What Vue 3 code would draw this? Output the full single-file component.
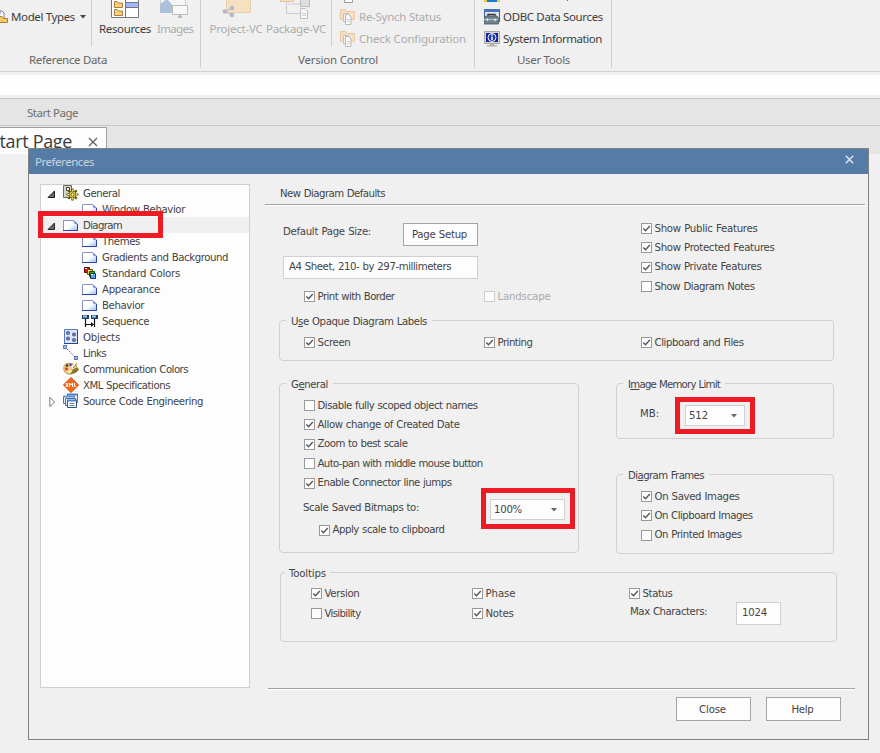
<script setup>
const applyFit = (el, width) => {
  el.style.letterSpacing = '0px'
  const range = document.createRange()
  range.selectNodeContents(el)
  const natural = range.getBoundingClientRect().width
  const count = el.textContent.length
  el.style.letterSpacing = ((width - natural) / count).toFixed(3) + 'px'
}
// Spreads a label over the given width in pixels.
const vFit = { mounted: (el, { value }) => applyFit(el, value) }

const tree = [
  { label: 'General', icon: 'gear', w: 37, open: true },
  { label: 'Window Behavior', icon: 'page', w: 83, child: true },
  { label: 'Diagram', icon: 'page', w: 39, open: true, selected: true },
  { label: 'Themes', icon: 'page', w: 38, child: true },
  { label: 'Gradients and Background', icon: 'page', w: 126, child: true },
  { label: 'Standard Colors', icon: 'colors', w: 78, child: true },
  { label: 'Appearance', icon: 'page', w: 58, child: true },
  { label: 'Behavior', icon: 'page', w: 42, child: true },
  { label: 'Sequence', icon: 'sequence', w: 47, child: true },
  { label: 'Objects', icon: 'objects', w: 37 },
  { label: 'Links', icon: 'links', w: 23 },
  { label: 'Communication Colors', icon: 'palette', w: 105 },
  { label: 'XML Specifications', icon: 'xml', w: 87 },
  { label: 'Source Code Engineering', icon: 'source', w: 120, closed: true },
]
const features = [
  { label: 'Show Public Features', w: 103, on: true },
  { label: 'Show Protected Features', w: 120, on: true },
  { label: 'Show Private Features', w: 107, on: true },
  { label: 'Show Diagram Notes', w: 100 },
]
const page = [
  { label: 'Print with Border', w: 77, on: true },
  { label: 'Landscape', w: 53, disabled: true },
]
const opaque = [
  { label: 'Screen', w: 33, on: true },
  { label: 'Printing', w: 35, on: true },
  { label: 'Clipboard and Files', w: 89, on: true },
]
const general = [
  { label: 'Disable fully scoped object names', w: 160 },
  { label: 'Allow change of Created Date', w: 142, on: true },
  { label: 'Zoom to best scale', w: 90, on: true },
  { label: 'Auto-pan with middle mouse button', w: 165 },
  { label: 'Enable Connector line jumps', w: 134, on: true },
]
const frames = [
  { label: 'On Saved Images', w: 85, on: true },
  { label: 'On Clipboard Images', w: 98, on: true },
  { label: 'On Printed Images', w: 87 },
]
const tips = [
  { label: 'Version', w: 35, on: true },
  { label: 'Phase', w: 30, on: true },
  { label: 'Status', w: 30, on: true },
  { label: 'Visibility', w: 36 },
  { label: 'Notes', w: 28, on: true },
]
</script>

<template>
  <div class="app">
    <svg class="defs" aria-hidden="true">
      <defs>
        <linearGradient id="pg" x1="0" y1="0" x2="1" y2="1"><stop offset=".5" stop-color="#fff" /><stop offset="1" stop-color="#9db9ee" /></linearGradient>
        <symbol id="i-page" viewBox="0 0 16 16">
          <path d="M.5 3.500H11L14.500 7V13.500H.5Z" fill="url(#pg)" stroke="#8d8fc9" />
          <path d="M0 13.500H14.500V7" fill="none" stroke="#2947a5" />
          <path d="M10.500 3.500L14.500 7.500L11.500 6.500Z" fill="#4475dc" />
        </symbol>
        <symbol id="i-gear" viewBox="0 0 16 16">
          <path d="M.5.5H8.500V12.500H.5Z" fill="#d8d5c8" stroke="#6c6a61" />
          <path d="M3.500 2.500H6.500V5.500H3.500Z" fill="#fff" stroke="#444" />
          <path d="M9.500 3.500V15.500M3.500 9.500H15.500M5.300 5.300L13.700 13.700M13.700 5.300L5.300 13.700" stroke="#5a5208" stroke-width="2.200" />
          <circle cx="9.500" cy="9.500" r="3.600" fill="#e6cc3a" stroke="#706208" />
          <path d="M9.500 4.500V6M4.500 9.500H6M13 9.500H14.500M9.500 13V14.500" stroke="#f8eb6c" />
          <circle cx="9.500" cy="9.500" r="1.500" fill="#fff" stroke="#665b12" />
        </symbol>
        <symbol id="i-colors" viewBox="0 0 16 16">
          <path d="M2.500 2.500H7.500V7.500H2.500Z" fill="#e00808" stroke="#5e0d0d" />
          <path d="M5.500 4.500H10.500V9.500H5.500Z" fill="#e9df13" stroke="#575411" />
          <path d="M7.500 6.500H12.500V11.500H7.500Z" fill="#19b91d" stroke="#0f4d14" />
          <path d="M8.500 8.500H13.500V13.500H8.500Z" fill="#5da7e9" stroke="#183551" />
          <path d="M3 3.500H5M6 5.500H8M9 9.500H11" stroke="#fff" />
        </symbol>
        <symbol id="i-sequence" viewBox="0 0 16 16">
          <path d="M0 2H7V6H0ZM9 2H16V6H9Z" fill="#253d61" />
          <path d="M1 3.500H5M10 3.500H14" stroke="#8ed3ef" stroke-width="2" />
          <path d="M3.500 6V14M12.500 6V14M4 11.500H11" stroke="#111" stroke-width="1.200" />
          <path d="M9 9L12 11.500L9 14Z" fill="#111" />
        </symbol>
        <symbol id="i-objects" viewBox="0 0 16 16">
          <path d="M1.500.5H14.500V14.500H1.500Z" fill="#dce6fc" stroke="#5c78bd" />
          <path d="M1 14.500H14.500V1" fill="none" stroke="#254582" />
          <g fill="#7180b4" stroke="#39457b" stroke-width=".7"><rect x="3.500" y="2.500" width="3" height="3" rx="1" /><rect x="9.500" y="4" width="3" height="3" rx="1" /><rect x="3.500" y="8" width="3" height="3" rx="1" /><rect x="9.500" y="9.500" width="3" height="3" rx="1" /></g>
        </symbol>
        <symbol id="i-links" viewBox="0 0 16 16">
          <path d="M.7.7H3.300V3.300H.7ZM11.700 11.700H14.300V14.300H11.700Z" fill="#fff" stroke="#5171be" stroke-width="1.200" />
          <path d="M4 4L12 12" stroke="#24366d" stroke-dasharray="1.200 1.400" />
        </symbol>
        <symbol id="i-palette" viewBox="0 0 16 16">
          <path d="M1 7C0 3 5 1 9 3C13 2 16 6 12 8C9 9 12 12 8 13C4 14 0 11 1 7Z" fill="#edcd8c" stroke="#c49a50" />
          <path d="M7 13C11 13 15 11 16 8L14 6.500L10 8.500Z" fill="#8b7520" />
          <path d="M9 7L13 2" stroke="#fff" stroke-width="2.200" /><path d="M10 7L14 2" stroke="#8b6d27" />
          <circle cx="4" cy="4.500" r="1.300" fill="#333" /><circle cx="7.500" cy="3.800" r="1.300" fill="#2555d1" /><circle cx="3.500" cy="8" r="1.400" fill="#db2e22" /><circle cx="7" cy="10.500" r="1.500" fill="#fff8bb" />
        </symbol>
        <symbol id="i-xml" viewBox="0 0 16 16">
          <path d="M8 .5L15.500 8L8 15.500L.5 8Z" fill="#f26916" stroke="#cf4308" />
          <path d="M3 6L5 10M5 6L3 10M6.500 10V6L8 8L9.500 6V10M11.500 6V9.500H13" fill="none" stroke="#fff" stroke-width=".95" />
        </symbol>
        <symbol id="i-source" viewBox="0 0 16 16">
          <path d="M4.500 1.500H14.500V9.500H4.500Z" fill="#eef4fd" stroke="#56739f" />
          <path d="M4 1.500H15" stroke="#4f7fc8" stroke-width="2" />
          <path d="M.5 3.500H11.500V10.500H.5Z" fill="#eef4fd" stroke="#56739f" />
          <path d="M0 3.500H12" stroke="#6492d4" stroke-width="2" />
          <path d="M2.500 5.500H12.500V12.500H2.500Z" fill="#eef4fd" stroke="#466ba8" />
          <path d="M4.500 7.500H13.500V14.500H4.500Z" fill="#fff" stroke="#304c79" />
          <path d="M4 7.500H14" stroke="#4f7fc8" stroke-width="2" />
          <path d="M6.500 10.500H11.500M6.500 12.500H11.500" stroke="#6b7e9d" />
        </symbol>
        <symbol id="i-sync" viewBox="0 0 16 16">
          <path d="M.5.5H5.500L6.500 2.500H14.500V10.500H.5Z" fill="#f8dec0" stroke="#e9c9a3" />
          <path d="M3.500 4.500H8.500V12.500H3.500Z" fill="#f3f3f3" stroke="#c3c3c3" />
          <path d="M5.500 5.500H8.500L11 8V15.500H5.500Z" fill="#fafafa" stroke="#b9b9b9" />
          <path d="M7 10.500H10M7 12.500H10" stroke="#ccc" />
        </symbol>
        <symbol id="i-check" viewBox="0 0 11 11"><path d="M2.300 5.500L4.500 7.700L8.800 3" fill="none" stroke="#555" stroke-width="1.400" /></symbol>
      </defs>
    </svg>

    <header class="ribbon">
      <section class="group g1">
        <div class="tools">
          <div class="small models">
            <svg width="10" height="16" viewBox="0 0 10 16"><path d="M0 5V2H2L4 4V9" fill="#fff" stroke="#777799" /><path d="M-3 7.500H2L3.500 9.500H7.500V13.500H-3Z" fill="#f8ca6c" stroke="#b0802c" /></svg>
            <span v-fit="64">Model Types</span>
            <svg class="caret" width="6" height="4" viewBox="0 0 6 4"><path d="M0 0H6L3 3.500Z" fill="#444" /></svg>
          </div>
          <div class="big res">
            <svg width="30" height="20" viewBox="0 0 30 20"><path d="M1.500-2H28.500V17.500H1.500Z" fill="#fff" stroke="#777" /><path d="M15.500-1V17" stroke="#777" /><path d="M16 3H28V7H16Z" fill="#a0b6ff" /><path d="M16 2.500H28M16 7.500H28" stroke="#777" /><path d="M4.500 1.500H7L8 3H12.500V7.500H4.500ZM4.500 9.500H7L8 11H12.500V15.500H4.500Z" fill="#fdce78" stroke="#ad813b" /></svg>
            <span v-fit="52">Resources</span>
          </div>
          <div class="big img off">
            <svg width="30" height="20" viewBox="0 0 30 20"><path d="M.5 12.500V-2H25.500V12.500Z" fill="#f7f7f7" stroke="#d4d4d4" /><path d="M0 13V4L7-1L15 8V13Z" fill="#acc0d7" /><path d="M12.500 5.500H27.500V14.500H12.500Z" fill="#f8f8f8" stroke="#bbb" /><path d="M20 15V17M18 17H22" stroke="#bbb" stroke-width="2" /></svg>
            <span v-fit="36">Images</span>
          </div>
        </div>
        <div class="caption"><span v-fit="78">Reference Data</span></div>
      </section>
      <section class="group g2">
        <div class="tools">
          <div class="big prj off">
            <svg width="30" height="20" viewBox="0 0 30 20"><path d="M5.500-2H29.500V12.500H5.500Z" fill="#f5e1c2" stroke="#e5cfac" /><path d="M4 11.500L11 8M4 11.500L11 15" stroke="#b8b7c7" /><g fill="#b8b7c7"><circle cx="4" cy="11.500" r="2.300" /><circle cx="11" cy="8" r="2.300" /><circle cx="11" cy="15" r="2.300" /></g></svg>
            <span v-fit="53">Project-VC</span>
          </div>
          <div class="big pkg off">
            <svg width="32" height="20" viewBox="0 0 32 20"><path d="M.5-2H13.500V1.500H.5Z" fill="#f5e1c2" stroke="#dec7a2" /><path d="M6.500 2V13.500H21M8 4H22" fill="none" stroke="#ccc" /><path d="M20.500-2H29.500V6.500H20.500Z" fill="#dedede" stroke="#bbb" /><path d="M20.500 8.500H25L27.500 11V18.500H20.500Z" fill="#fafafa" stroke="#bbb" /><path d="M22 13.500H26M22 15.500H26" stroke="#ccc" /></svg>
            <span v-fit="60">Package-VC</span>
          </div>
          <div class="list off">
            <div class="small"><svg width="16" height="16"><use href="#i-sync" /></svg><span v-fit="82">Re-Synch Status</span></div>
            <div class="small"><svg width="16" height="16"><use href="#i-sync" /></svg><span v-fit="107">Check Configuration</span></div>
            <svg class="sliver" width="14" height="3"><path d="M3.500 0V2.500H11.500V0" fill="#fff" stroke="#999" /></svg>
          </div>
        </div>
        <div class="caption"><span v-fit="80">Version Control</span></div>
      </section>
      <section class="group g3">
        <div class="tools">
          <div class="list">
            <div class="small"><svg width="16" height="16" viewBox="0 0 16 16"><path d="M.5.5H15.500V12.500H.5Z" fill="#dfe6ee" stroke="#395c91" /><path d="M0 1.500H16" stroke="#4770bd" stroke-width="3" /><path d="M4 8V5.500H11V8" fill="none" stroke="#333" stroke-width="1.300" /><path d="M0 15V9L2 7H13L14.500 9V15Z" fill="#71838f" stroke="#46555f" stroke-width=".8" /><path d="M0 10.500H14.500" stroke="#b7c6ce" /><path d="M3.500 9.500V12M11 9.500V12" stroke="#eee" stroke-width="1.300" /></svg><span v-fit="100">ODBC Data Sources</span></div>
            <div class="small"><svg width="16" height="16" viewBox="0 0 16 16"><path d="M.5.5H15.500V12.500H.5Z" fill="#d7d5c7" stroke="#aaa89e" /><path d="M2 2H14V11H2Z" fill="#1421a0" /><circle cx="8" cy="6.500" r="4" fill="#1b36bd" stroke="#fff" /><path d="M8 3.500V4.700M8 5.500V9" stroke="#fff" stroke-width="1.500" /><path d="M6 13H10V14H13V15.500H3V14H6Z" fill="#b6b4ab" /></svg><span v-fit="99">System Information</span></div>
            <svg class="sliver" width="90" height="2"><path d="M0 0H16V2H0Z" fill="#ffc52e" /><path d="M3 0H13V2H3Z" fill="#147dce" /><path d="M83 0H84V1H83Z" fill="#666" /></svg>
          </div>
        </div>
        <div class="caption"><span v-fit="53">User Tools</span></div>
      </section>
    </header>
    <div class="white"></div>
    <div class="crumb"><span v-fit="51">Start Page</span></div>
    <div class="tabs"><div class="tab"><span class="tabname" v-fit="82">Start Page</span>
      <svg width="10" height="10" viewBox="0 0 10 10"><path d="M1 1L9 9M9 1L1 9" stroke="#666" stroke-width="1.400" /></svg></div></div>

    <div class="dialog">
      <div class="title"><span v-fit="59">Preferences</span>
        <svg width="9" height="9" viewBox="0 0 9 9"><path d="M.8.8L8.200 8.200M8.200.8L.8 8.200" stroke="#dbe5ef" stroke-width="1.500" /></svg></div>
      <div class="body">
        <nav class="tree">
          <div v-for="n in tree" :key="n.label" class="node" :class="{ child: n.child, selected: n.selected }">
            <span class="twist">
              <svg v-if="n.open" width="9" height="9" viewBox="0 0 9 9"><path d="M7.500 1V7.500H1Z" fill="#666" stroke="#222" /></svg>
              <svg v-if="n.closed" class="closed" width="7" height="12" viewBox="0 0 7 12"><path d="M.8 1.500L5.800 6L.8 10.500Z" fill="#fff" stroke="#777" /></svg>
            </span>
            <svg width="16" height="16"><use :href="'#i-' + n.icon" /></svg>
            <span class="name" v-fit="n.w">{{ n.label }}</span>
          </div>
        </nav>

        <main class="pane">
          <h2><span v-fit="105">New Diagram Defaults</span></h2>
          <div class="defaults">
            <div class="left">
              <div class="size"><span v-fit="88">Default Page Size:</span><button><span v-fit="55">Page Setup</span></button></div>
              <div class="field sheet"><span v-fit="162">A4 Sheet, 210- by 297-millimeters</span></div>
              <div class="cols">
                <label v-for="c in page" :key="c.label" class="check" :class="{ disabled: c.disabled }"><i><svg v-if="c.on" width="11" height="11"><use href="#i-check" /></svg></i><span v-fit="c.w">{{ c.label }}</span></label>
              </div>
            </div>
            <div class="stack">
              <label v-for="c in features" :key="c.label" class="check"><i><svg v-if="c.on" width="11" height="11"><use href="#i-check" /></svg></i><span v-fit="c.w">{{ c.label }}</span></label>
            </div>
          </div>

          <div class="box opaque">
            <div class="legend"><span v-fit="136">U<u>s</u>e Opaque Diagram Labels</span></div>
            <div class="cols">
              <label v-for="c in opaque" :key="c.label" class="check"><i><svg v-if="c.on" width="11" height="11"><use href="#i-check" /></svg></i><span v-fit="c.w">{{ c.label }}</span></label>
            </div>
          </div>

          <div class="pair">
            <div class="box general">
              <div class="legend"><span v-fit="37">G<u>e</u>neral</span></div>
              <div class="stack">
                <label v-for="c in general" :key="c.label" class="check"><i><svg v-if="c.on" width="11" height="11"><use href="#i-check" /></svg></i><span v-fit="c.w">{{ c.label }}</span></label>
              </div>
              <div class="scale"><span v-fit="116">Scale Saved Bitmaps to:</span>
                <div class="combo"><span v-fit="28">100%</span><svg width="6" height="4"><path d="M0 0H6L3 3.500Z" fill="#666" /></svg></div></div>
              <label class="check apply"><i><svg width="11" height="11"><use href="#i-check" /></svg></i><span v-fit="112">Apply scale to clipboard</span></label>
            </div>
            <div class="side">
              <div class="box memory">
                <div class="legend"><span v-fit="92">I<u>m</u>age Memory Limit</span></div>
                <div class="mb"><span v-fit="19">MB:</span>
                  <div class="combo"><span v-fit="19">512</span><svg width="6" height="4"><path d="M0 0H6L3 3.500Z" fill="#666" /></svg></div></div>
              </div>
              <div class="box frames">
                <div class="legend"><span v-fit="76">Di<u>a</u>gram Frames</span></div>
                <div class="stack">
                  <label v-for="c in frames" :key="c.label" class="check"><i><svg v-if="c.on" width="11" height="11"><use href="#i-check" /></svg></i><span v-fit="c.w">{{ c.label }}</span></label>
                </div>
              </div>
            </div>
          </div>

          <div class="box tooltips">
            <div class="legend"><span v-fit="37">Tooltips</span></div>
            <div class="tipgrid">
              <label v-for="c in tips" :key="c.label" class="check"><i><svg v-if="c.on" width="11" height="11"><use href="#i-check" /></svg></i><span v-fit="c.w">{{ c.label }}</span></label>
              <div class="max"><span v-fit="77">Max Characters:</span><div class="field"><span v-fit="25">1024</span></div></div>
            </div>
          </div>

          <footer><button><span v-fit="27">Close</span></button><button><span v-fit="22">Help</span></button></footer>
        </main>
      </div>
    </div>
    <div class="mark m1"></div>
    <div class="mark m2"></div>
    <div class="mark m3"></div>
  </div>
</template>

<style>
body { margin: 0; background: #f0f0f0; }
</style>

<style scoped>
* { box-sizing: border-box; }
.app { position: relative; width: 880px; height: 753px; overflow: hidden; background: #f0f0f0; color: #3c3c3c; font: 11.500px/16px "Noto Sans", "Open Sans", sans-serif; }
.defs { position: absolute; width: 0; height: 0; }
span { white-space: nowrap; }
svg { display: block; flex: none; }
.ribbon { display: flex; height: 72px; border-bottom: 1px solid #cfcfcf; }
.group { display: flex; flex-direction: column; height: 68px; border-right: 1px solid #cfcfcf; }
.g1 { width: 201px; } .g2 { width: 274px; } .g3 { width: 137px; }
.tools { display: flex; height: 46px; }
.caption { padding-top: 6px; color: #666; }
.g1 .caption { padding-left: 29px; } .g2 .caption { padding-left: 97px; } .g3 .caption { padding-left: 42px; }
.small { display: flex; align-items: center; gap: 3px; height: 22px; }
.models { width: 92px; height: 46px; padding-bottom: 12px; gap: 2px; border-right: 1px solid #cfcfcf; }
.models > svg:first-child { margin-right: -1px; }
.caret { margin-left: 3px; }
.big { display: flex; flex-direction: column; align-items: center; gap: 1px; }
.res { width: 66px; } .img { width: 34px; margin-right: 1px; }
.prj { width: 70px; } .pkg { width: 50px; }
.off { color: #acacac; }
.list { position: relative; padding: 6px 0 0 9px; height: 46px; }
.g2 .list { margin-left: 10px; padding-left: 8px; border-left: 1px solid #cfcfcf; }
.sliver { position: absolute; left: 9px; top: 0; }
.white { height: 20px; margin: 3px 0; background: #fdfdfd; }
.crumb { height: 28px; padding: 6px 0 0 27px; background: #e5e5e5; border-top: 1px solid #c8c8c8; border-bottom: 1px solid #c8c8c8; color: #6d6d6d; }
.tabs { display: flex; height: 28px; padding-top: 1px; background: #e5e5e5; }
.tab { display: flex; width: 107px; height: 27px; margin-right: auto; background: #fdfdfd; border: solid #a0a0a0; border-width: 1px 1px 0 0; }
.tabname { width: 88px; margin-left: -10px; font: 18px/27px "Open Sans", sans-serif; }
.tab svg { margin: 9px 0 0 10px; }

.dialog { position: absolute; left: 28px; top: 148px; width: 841px; height: 592px; background: #f0f0f0; border: 1px solid #808080; font: 11.300px/18px "DejaVu Sans Condensed", "Open Sans", sans-serif; color: #444; word-spacing: .4px; }
.title { display: flex; justify-content: space-between; height: 25px; padding: 5px 14px 0 6px; background: #557ca6; color: #c8d3df; font: 11.500px/16px "Noto Sans", sans-serif; }
.title svg { margin-top: 1px; }
.body { display: flex; }
.tree { width: 210px; height: 504px; margin: 10px 0 0 11px; background: #fdfdfd; border: 1px solid #d0d0d0; flex: none; }
.node { display: flex; height: 16px; }
.node.selected { background: #f0f0f0; }
.twist { width: 22px; padding: 5px 0 0 6px; }
.twist .closed { margin: -2px 0 0 2px; }
.child .twist { width: 41px; }
.name { padding-left: 4px; }
.pane { display: flex; flex-direction: column; width: 600px; margin-left: 15px; }
h2 { height: 31px; margin: 0; padding: 11px 0 0 15px; font: inherit; border-bottom: 1px solid #a0a0a0; box-shadow: 0 1px #fff; }
.defaults { display: flex; height: 115px; }
.left { width: 376px; padding: 18px 0 0 18px; }
.size { display: flex; width: 195px; height: 23px; justify-content: space-between; }
button { width: 75px; height: 24px; padding: 1px 2px 0 0; background: #fdfdfd; border: 1px solid #a5a5a5; color: inherit; font: inherit; word-spacing: inherit; }
.size button { height: 23px; }
.field { height: 23px; padding: 1px 0 0 5px; background: #fdfdfd; border: 1px solid #d0d0d0; }
.sheet { width: 195px; margin-top: 10px; }
.check { display: flex; align-items: center; gap: 3px; height: 11px; }
.check span { margin-left: -.5px; }
.check i { width: 11px; height: 11px; background: #fdfdfd; border: 1px solid #999; flex: none; }
.check i svg { margin: -1px; }
.check.disabled { color: #aaa; }
.disabled i { border-color: #ccc; }
.cols { display: grid; grid-template-columns: 180px 157px 1fr; }
.left .cols { margin: 12px 0 0 21px; }
.defaults .stack { padding-top: 18px; }
.stack { display: flex; flex-direction: column; gap: 8.400px; }
.box { border: 1px solid #d0d0d0; border-radius: 4px; }
.legend { display: flex; width: max-content; height: 16px; margin: -8px 0 0 6px; padding: 0 5px; background: #f0f0f0; }
.opaque { width: 555px; height: 41px; margin-left: 14px; }
.opaque .cols { margin: 8px 0 0 24px; }
.pair { display: flex; gap: 37px; margin: 22px 0 0 14px; }
.general { width: 300px; height: 170px; }
.general .stack { margin: 8px 0 0 24px; }
.scale { display: flex; justify-content: space-between; align-items: flex-start; width: 262px; margin: 10px 0 0 23px; }
.combo { display: flex; justify-content: space-between; align-items: center; width: 75px; height: 21px; padding: 1px 7px 0 3px; background: #fdfdfd; border: 1px solid #d0d0d0; }
.apply { margin: 5px 0 0 39px; }
.memory { width: 218px; height: 56px; }
.mb { display: flex; justify-content: space-between; width: 105px; margin: 13px 0 0 23px; }
.mb .combo { width: 60px; }
.frames { width: 218px; height: 80px; margin-top: 35px; }
.frames .stack { margin: 8px 0 0 24px; }
.tooltips { width: 557px; height: 70px; margin: 18px 0 0 15px; }
.tooltips .legend { margin-left: 4px; padding: 0 4px; }
.tipgrid { display: grid; grid-template-columns: 161px 157px 1fr; grid-template-rows: 11px 11px; row-gap: 9px; margin: 7px 0 0 30px; }
.max { display: flex; justify-content: space-between; width: 152px; height: 23px; margin-top: -6px; padding-left: 1px; }
.max > span { padding-top: 1px; }
.max .field { width: 45px; }
footer { display: flex; gap: 15px; width: 587px; margin: 46px 0 0 3px; padding: 8px 0 0 408px; border-top: 1px solid #a0a0a0; box-shadow: inset 0 1px #fff; }
.mark { position: absolute; border: 5px solid #ed1c24; }
.m1 { left: 38px; top: 211px; width: 125px; height: 27px; }
.m2 { left: 481px; top: 488px; width: 94px; height: 41px; }
.m3 { left: 675px; top: 397px; width: 80px; height: 37px; }
</style>
